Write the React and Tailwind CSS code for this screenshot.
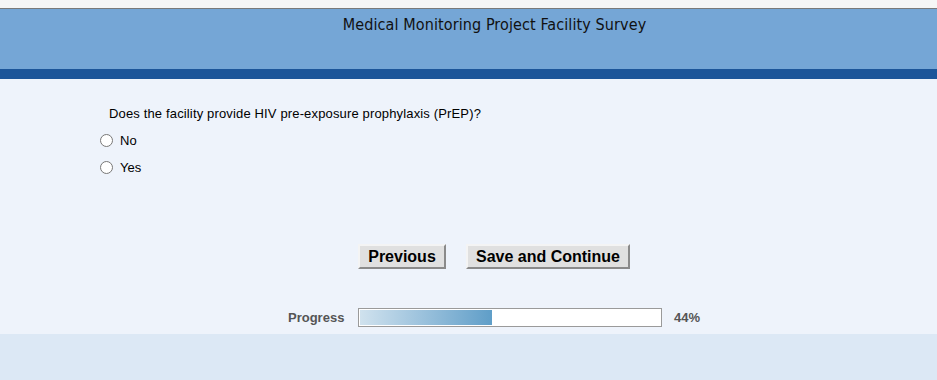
import React, { useState } from 'react';

const App = () => {
  const [answer, setAnswer] = useState('');
  const progress = 44;

  return (
    <div className="w-[937px] h-[380px] overflow-hidden bg-[#dce8f5] font-['Liberation_Sans',Arial,sans-serif] text-black">
      {/* top strip */}
      <div className="h-[8px] bg-[#f6f6f6]" />
      <div className="h-[1px] bg-[#7a7a7a]" />

      {/* header */}
      <div className="h-[60px] bg-[#75a6d6] flex justify-center pt-[6px]">
        <h1 className="text-[16px] leading-[20px] font-['DejaVu_Sans_Condensed','DejaVu_Sans',sans-serif] [font-stretch:condensed] text-[#111] pl-[52px] tracking-[0.1px]">
          Medical Monitoring Project Facility Survey
        </h1>
      </div>
      <div className="h-[10px] bg-[#1c5599]" />

      {/* body */}
      <div className="h-[255px] bg-[#eef3fb] flex flex-col">
        <div className="pl-[100px] pt-[27px]">
          <p className="text-[13px] leading-[15px] pl-[9px] tracking-[0.15px]">
            Does the facility provide HIV pre-exposure prophylaxis (PrEP)?
          </p>
          <div className="mt-[12px] flex flex-col gap-[12px]">
            {['No', 'Yes'].map((opt) => (
              <label key={opt} className="flex items-center gap-[7px] text-[13px] leading-[15px] cursor-pointer">
                <input
                  type="radio"
                  name="prep"
                  checked={answer === opt}
                  onChange={() => setAnswer(opt)}
                  className="w-[13px] h-[13px] m-0"
                />
                {opt}
              </label>
            ))}
          </div>
        </div>

        <div className="mt-[69px] flex justify-center gap-[20px] pl-[51px]">
          <button className="h-[25px] w-[88px] bg-[#e0e0e0] border-2 border-t-[#f4f4f4] border-l-[#f4f4f4] border-b-[#8a8a8a] border-r-[#8a8a8a] text-[16px] font-bold leading-none">
            Previous
          </button>
          <button className="h-[25px] w-[164px] bg-[#e0e0e0] border-2 border-t-[#f4f4f4] border-l-[#f4f4f4] border-b-[#8a8a8a] border-r-[#8a8a8a] text-[16px] font-bold leading-none">
            Save and Continue
          </button>
        </div>

        <div className="mt-[39px] flex items-center pl-[288px]">
          <span className="text-[13px] font-bold text-[#555] w-[70px]">Progress</span>
          <div className="w-[304px] h-[19px] border border-[#9a9a9a] bg-white p-[1px]">
            <div
              className="h-full bg-gradient-to-r from-[#d0e2ee] to-[#5f9ec8]"
              style={{ width: `${progress}%` }}
            />
          </div>
          <span className="ml-[12px] text-[13px] font-bold text-[#555]">{progress}%</span>
        </div>
      </div>
    </div>
  );
};

export default App;
